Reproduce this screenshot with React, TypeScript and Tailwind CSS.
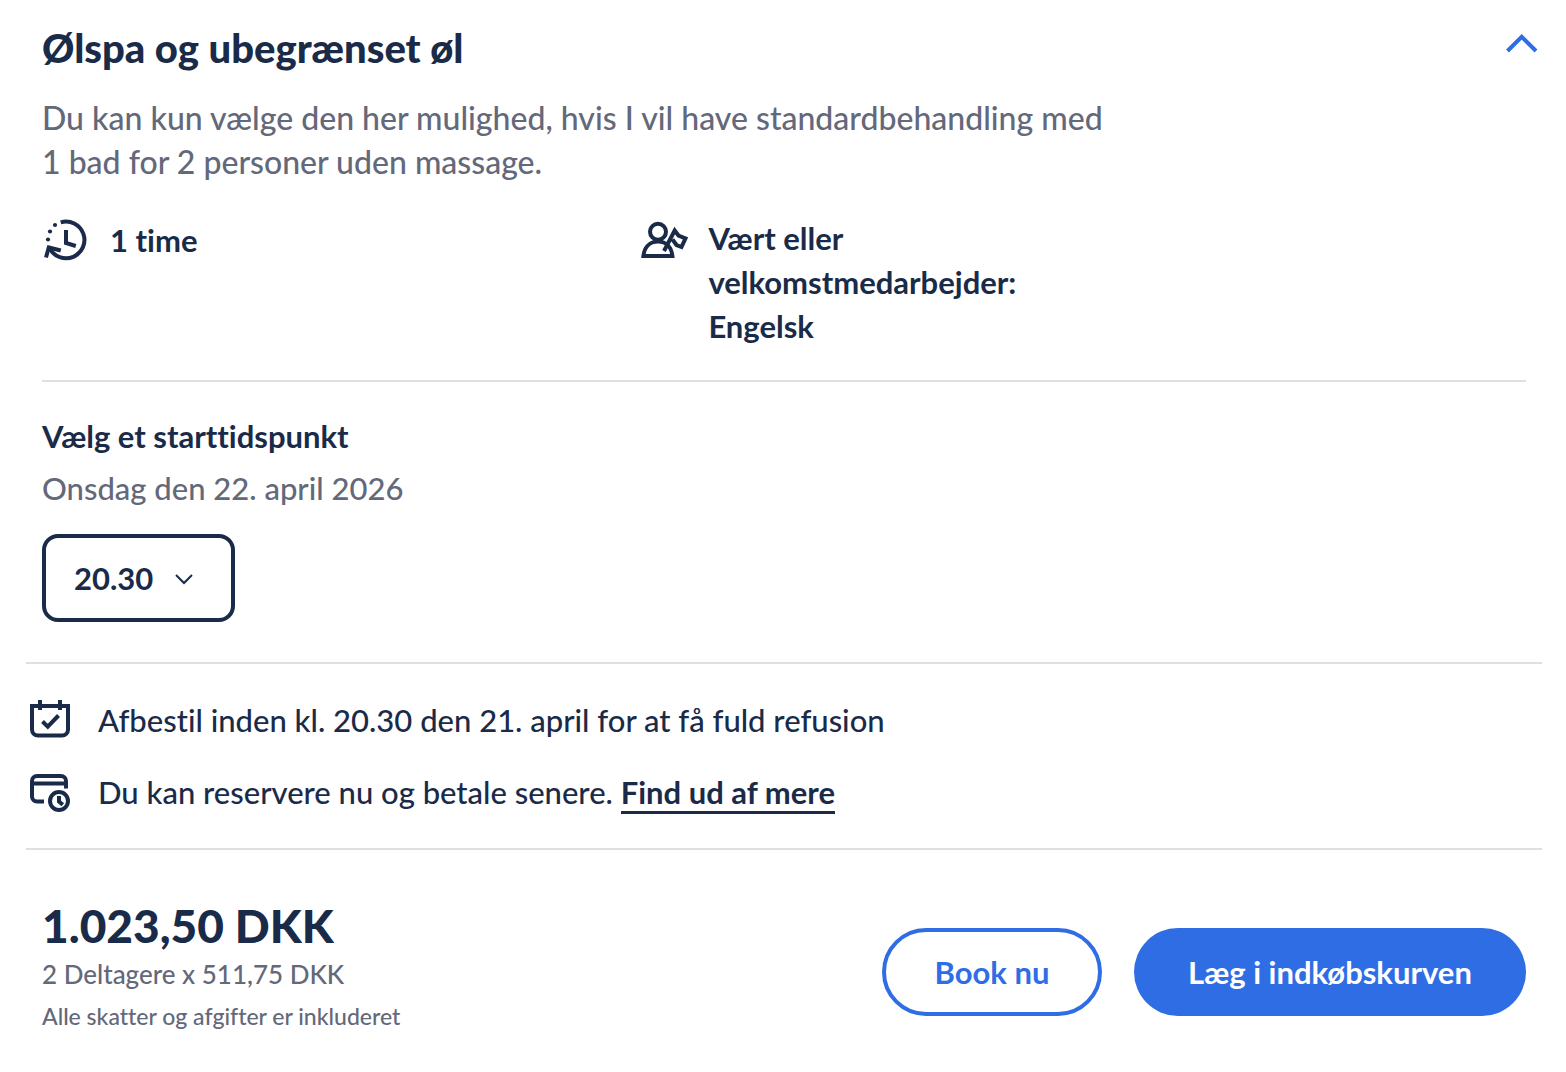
import React, { useState } from "react";

interface IconProps {
  children: React.ReactNode
}

const Icon: React.FC<IconProps> = ({ children }) => (
  <svg viewBox="0 0 48 48" className="size-12 shrink-0" fill="none" stroke="currentColor" strokeWidth="4" aria-hidden="true">
    {children}
  </svg>
);

const DurationIcon = () => (
  <Icon>
    <path d="M18.7 6.3A18.4 18.4 0 1 1 7.6 32.200" />
    <path d="M4 41.5 6.8 31.500l12 3" />
    <path d="M24 14v13l9.8 3" />
    <g fill="currentColor" stroke="none">
      <circle cx="13" cy="9" r="2.1" />
      <circle cx="8" cy="15.5" r="2.1" />
      <circle cx="6" cy="23.5" r="2.1" />
    </g>
  </Icon>
);

const GuideIcon = () => (
  <Icon>
    <circle cx="18" cy="15.7" r="8" />
    <path d="M18 25.500C9.500 25.500 4.300 31.500 3.400 40H32.400C31.500 31.500 26.500 25.500 18 25.500z" />
    <path d="M24 35 34.700 14.500 38.500 19.500 45.500 22.300 41.500 31 36.500 29 32.500 23.500" />
  </Icon>
);

const CancelIcon = () => (
  <Icon>
    <path d="M6 10h36v23.500a6 6 0 0 1-6 6H12a6 6 0 0 1-6-6z" />
    <path d="M14 4v10M34 4v10" />
    <path d="m16.500 25.500 5.300 5.200L32.500 19.500" />
  </Icon>
);

const PayLaterIcon = () => (
  <Icon>
    <path d="M18 33.500h-7a5 5 0 0 1-5-5V13a5 5 0 0 1 5-5h24a5 5 0 0 1 5 5v7.500" />
    <path d="M6 15.500h34" />
    <circle cx="33" cy="33" r="9" />
    <path d="M33 28v5.500l3.800 3.200" />
  </Icon>
);

const App: React.FC = () => {
  const [open, setOpen] = useState(true)
  const [time, setTime] = useState("20.30")

  return (
    <main className="bg-white pt-6 pr-6 pb-9 pl-[26px] font-['Lato',sans-serif] text-[31px] leading-[44px] font-medium text-[#1a2b49] [font-variant-ligatures:none]">
      <div className="px-4">
        <div className="flex items-start justify-between">
          <h2 className="text-[40px] leading-[48px] font-black">Ølspa og ubegrænset øl</h2>
          <button
            type="button"
            aria-label="Vis eller skjul detaljer"
            aria-expanded={open}
            onClick={() => setOpen(!open)}
            className="-mr-3 cursor-pointer py-2 text-[#2f6de5]"
          >
            <svg viewBox="0 0 32 24" className="h-6 w-8" fill="none" stroke="currentColor" strokeWidth="4">
              <path d="M1.500 19 15.700 4.800 30 19" />
            </svg>
          </button>
        </div>

        {open && (
          <>
            <p className="mt-6 max-w-[1072px] text-[32px] text-[#63687a]">
              Du kan kun vælge den her mulighed, hvis I vil have standardbehandling med 1 bad for 2 personer uden massage.
            </p>
            <div className="mt-8 grid grid-cols-[2fr_3fr] gap-2 font-bold">
              <div className="flex items-start gap-5">
                <DurationIcon />
                <p className="leading-12">1 time</p>
              </div>
              <div className="flex items-start gap-5">
                <GuideIcon />
                <p className="max-w-[380px]">Vært eller velkomstmedarbejder: Engelsk</p>
              </div>
            </div>
          </>
        )}

        <div className="mt-8 border-t-2 border-[#dcdfe4] pt-8 pb-10">
          <label htmlFor="start-time" className="block font-bold">Vælg et starttidspunkt</label>
          <p className="mt-2 text-[#63687a]">Onsdag den 22. april 2026</p>
          <div className="relative mt-6 w-[193px]">
            <select
              id="start-time"
              value={time}
              onChange={(e) => setTime(e.target.value)}
              className="block h-22 w-full cursor-pointer appearance-none rounded-2xl border-4 border-[#1a2b49] bg-white pl-7 font-bold"
            >
              <option value="20.30">20.30</option>
            </select>
            <svg viewBox="0 0 20 12" className="pointer-events-none absolute top-[39px] right-[41px] h-3 w-5" fill="none" stroke="currentColor" strokeWidth="2">
              <path d="m2 2 8 8 8-8" />
            </svg>
          </div>
        </div>
      </div>

      <ul className="flex flex-col gap-6 border-y-2 border-[#dcdfe4] py-8">
        <li className="flex items-center gap-6">
          <CancelIcon />
          <p>Afbestil inden kl. 20.30 den 21. april for at få fuld refusion</p>
        </li>
        <li className="flex items-center gap-6">
          <PayLaterIcon />
          <p>
            Du kan reservere nu og betale senere.{" "}
            <a href="#pay-later" className="border-b-3 border-[#1a2b49] font-bold">Find ud af mere</a>
          </p>
        </li>
      </ul>

      <div className="flex items-center justify-between px-4 pt-12">
        <div className="text-[#63687a]">
          <p className="text-[46px] leading-14 font-black text-[#1a2b49]">1.023,50 DKK</p>
          <p className="text-[26px] leading-10">2 Deltagere x 511,75 DKK</p>
          <p className="mt-1 text-[23px] leading-9">Alle skatter og afgifter er inkluderet</p>
        </div>
        <div className="flex gap-8 pt-3 font-bold">
          <button type="button" className="h-22 w-[220px] cursor-pointer rounded-full border-4 border-[#2f6de5] text-[#2f6de5]">
            Book nu
          </button>
          <button type="button" className="h-22 w-[392px] cursor-pointer rounded-full bg-[#2f6de5] text-white">
            Læg i indkøbskurven
          </button>
        </div>
      </div>
    </main>
  );
};

export default App;
